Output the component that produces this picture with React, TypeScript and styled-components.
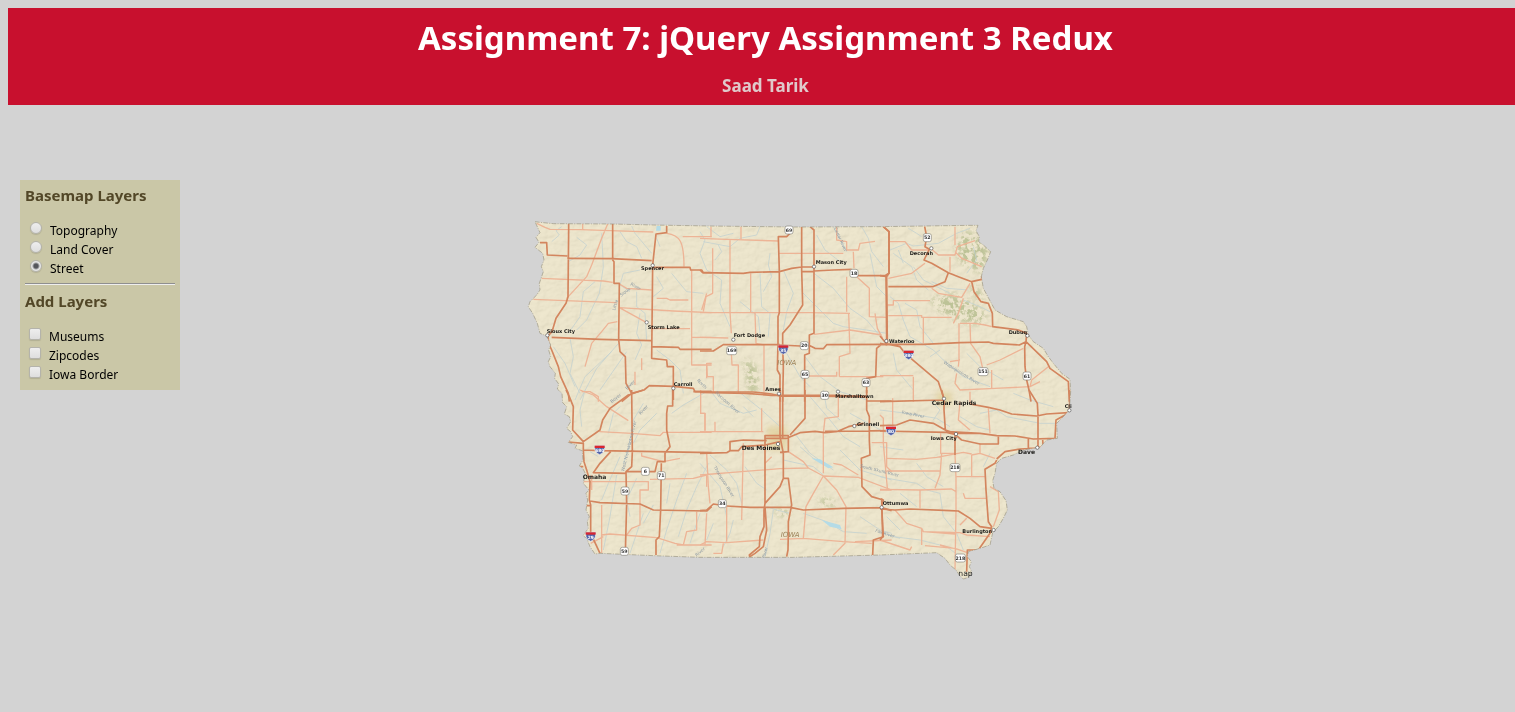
import React from 'react';
import styled, { createGlobalStyle } from 'styled-components';

const GlobalStyle = createGlobalStyle`
  body {
    margin: 8px 0 8px 8px;
    background: #d3d3d3;
    color: #000;
    font-family: Tahoma, "Noto Sans", sans-serif;
  }
`;

const Header = styled.header`
  padding: 10px 0 9px 8px;
  background: #c8102e;
  text-align: center;
`;

const Title = styled.h1`
  margin: 0 0 18px;
  color: #fff;
  font-size: 33px;
  line-height: 40px;
`;

const Author = styled.p`
  margin: 0;
  color: #e0c9cb;
  font-size: 17px;
  font-weight: bold;
  line-height: 20px;
`;

const Main = styled.main`
  display: flex;
  align-items: flex-start;
  padding: 75px 96px 0 12px;
`;

const Panel = styled.form`
  flex: none;
  width: 150px;
  padding: 5px 5px 6px;
  background: #cac7a7;
`;

const LayerGroup = styled.fieldset`
  min-width: 0;
  margin: 0;
  padding: 0;
  border: 0;
`;

const GroupTitle = styled.legend`
  margin: 0 0 16px;
  padding: 0;
  color: #524727;
  font-size: 15px;
  font-weight: bold;
  line-height: 20px;
`;

const Divider = styled.hr`
  margin: 5px 0 6px;
  border: 0;
  border-top: 1px solid #8f8f8f;
  border-bottom: 1px solid #eee;
`;

const Option = styled.label<{ $indent: number }>`
  display: flex;
  align-items: flex-start;
  gap: 8px;
  padding-left: ${(p) => p.$indent}px;
  font-size: 12px;
  line-height: 19px;
`;

const Tick = styled.input`
  appearance: none;
  flex: none;
  box-sizing: border-box;
  width: 12px;
  height: 12px;
  margin: 1px 0 0;
  border: 1px solid #b4b3ab;
  border-radius: 2px;
  background: linear-gradient(#eee, #dedede);
  box-shadow: 0 1px 1px rgba(0, 0, 0, 0.12);

  &[type='radio'] {
    border-radius: 50%;
  }
  &[type='radio']:checked {
    background: radial-gradient(circle, #55565c 0 2px, #e6e6e6 4px);
  }
  &[type='checkbox']:checked {
    background: #666;
  }
`;

const MapArea = styled.section`
  flex: 1;
  display: flex;
  justify-content: center;
  padding-top: 30px;
`;

const MapSvg = styled.svg`
  display: block;
  flex: none;
  width: 560px;
  height: 380px;
  font-family: "DejaVu Sans", sans-serif;
`;

const Relief = styled.path`
  mix-blend-mode: multiply;
`;

const OUTLINE =
  'M45 35L60 37L100 41L280 42L400 45L570 48L820 51L1080 50L1350 46L1374 46L1368 62L1378 80L1376 95L1390 105L1412 125L1402 150L1390 175L1384 200L1390 235L1406 265L1425 300L1460 320L1510 335L1520 350L1525 375L1540 395L1570 415L1585 440L1600 460L1625 490L1650 508L1652 545L1648 600L1630 620L1610 640L1612 685L1580 690L1560 712L1510 720L1480 735L1445 745L1430 760L1425 790L1418 812L1422 835L1440 845L1458 872L1462 900L1450 925L1435 950L1418 968L1410 1005L1380 1015L1345 1025L1342 1040L1354 1055L1348 1070L1355 1085L1346 1102L1330 1107L1318 1095L1308 1080L1290 1065L1275 1045L1250 1028L1080 1035L820 1042L540 1042L400 1037L240 1030L225 1032L210 1010L200 985L189 977L205 955L202 935L208 920L198 900L203 870L198 850L207 840L190 820L196 790L188 775L178 768L189 750L187 722L165 715L170 705L145 697L158 680L152 665L140 655L152 635L148 620L133 612L140 590L128 578L126 550L112 537L116 522L104 505L106 490L90 470L85 455L92 440L86 420L92 405L80 378L60 370L52 340L38 310L25 290L30 275L50 255L60 240L58 220L70 185L64 170L72 150L68 130L45 112L57 97L48 82L60 68Z';

type Tile = { x: number; y: number; major: string; minor: string; rivers: string };

const TILES: Tile[] = [
  {
    x: 0,
    y: 0,
    major:
      'M146 35V60L144 260L138 280L108 325L96 365L84 378L86 400L95 420L115 470L122 500L145 550L148 575M60 98H80L82 135L142 138M142 145L275 146L395 152M278 40V150L282 155V220H298L296 388L300 425L316 440L318 520L335 550M440 48V68L408 72L398 165L395 445L440 450L442 470H460V570M395 172H510L512 180H545L550 188H575M95 382L240 388L395 392M395 410L475 412L480 418H575M305 575L335 550L372 540L388 527L460 529L520 535L525 545H575',
    minor:
      'M50 40L75 52L90 58L180 59L340 64L400 66M188 38V60M263 42L245 85L215 165L200 200L140 265M65 205L250 213L278 217M40 268L290 278M298 222L320 235L395 240M298 293L460 303L575 308M410 265H440L450 270H505M380 338L298 293M440 70C480 75 492 95 492 170M488 80H575M515 180V420M292 335L265 340L245 365L215 400L195 470M395 356H510M515 382H575M515 420V465H575M365 445V480M345 485V525M185 545H210L235 560V575M575 460H560V505M545 300L560 250',
    rivers:
      'M125 50L108 62L118 75L95 95M170 82L200 105L180 135L145 155M300 65L320 95L350 110L365 145M335 48L345 70L395 130M225 215L190 245L180 320L145 370M245 70L250 170L238 250L200 330L170 360M360 180L310 190L300 225L330 245M455 190L475 215L500 245L550 250M410 85L420 110M350 245V290L375 310L380 390M410 420L450 450L480 480L490 550M300 395L230 475L180 570M320 425L240 540M275 425L195 500L165 570M150 385L160 440L150 490L180 550M100 410L135 460L165 530M410 200L430 235L400 260M540 65L555 90L540 130M360 310L350 370L365 405L345 450',
  },
  {
    x: 540,
    y: 0,
    major:
      'M0 180L8 188L130 190L150 187L238 185L275 175L305 171H340M270 70L260 80H235L238 185V308L234 320V400L232 480L240 495V575M305 50V180L308 285L270 345L248 370V405L250 470L248 575M330 50L342 60V370L328 375V430L314 435V575M305 185H340L342 183L400 180L455 178M460 197H565M550 50L567 65V190L558 195L560 390M0 423H40L70 404H240M240 405L300 408L330 407L345 415L370 416L380 404L575 403M0 546H160L215 552L240 558L500 560M545 402L530 415L527 500L500 505V550',
    minor:
      'M33 50V82M123 50V87M0 85L80 88L235 93M90 90V305L94 370M38 115V250L18 260L10 305M152 190V308M0 308H340M330 308L450 310M235 130H430M410 50V90L440 95V120H475L480 100L525 94M460 125L462 175M440 200V305M470 200L508 235V320L560 322M342 373L450 360L545 375M446 310L450 430L418 440V500M165 310L168 400L192 405V545M0 382L85 384M94 430L96 465H115V550M20 465L22 500H40V545M315 498H410M418 500H550M525 310L532 355L548 385M410 485V500',
    rivers:
      'M180 50L170 75L120 85L90 110L10 95M55 105L65 125L45 150M210 130L205 165L215 200L190 245M180 190L185 290L210 310L205 380M250 180L280 250L260 305L250 360M305 245L320 260L400 340L430 350L500 360L560 370M342 190L400 235L450 295L500 330L550 390M485 50L505 85L515 125L550 170M350 75L375 120L420 155M0 130L20 180L65 210L60 280L90 350M120 275L175 320L180 370M400 50L440 125M315 440L360 500L420 545L500 570M260 430L300 500L330 530M20 50L60 80L100 70M510 130L530 230L560 260',
  },
  {
    x: 1080,
    y: 0,
    major:
      'M10 50L27 65V190L20 198L22 400M0 197L22 200M134 50L140 80L135 110L148 118L132 150L155 160L205 188L235 200L275 215L305 208V198M205 188L195 215L158 230H25M275 215L282 245L303 275L325 280L337 310L338 350L415 360L440 370L438 395L418 405L340 400L325 396L240 398L130 403H0M440 375L438 395L434 410L435 470L440 510L447 540L453 575M438 395L500 455L510 475L565 515L568 575M0 378L20 402L60 410L75 430L175 515L190 560M0 400L22 405',
    minor:
      'M30 95H75L95 120H145M155 118L175 135H225L232 110L285 92M210 140V185M225 125L245 145L305 170M225 50V105M25 205L95 190L135 160M155 235L175 250L245 262L270 220M250 265L235 310L220 340M150 272H40V285H22M25 317H125V322H215M130 320V400M237 340V450L235 470M240 340H285L315 345L335 350M270 340L272 400L300 440L308 475M320 465L360 450L430 415M210 455L240 450M230 490L225 520L240 540L345 535L450 530L480 515M100 500V575M0 497H100M335 480V535M450 530L455 510L505 470',
    rivers:
      'M85 55L110 70L125 80M30 120L80 100L100 108L175 100L230 70L270 55M40 130L95 170L110 210L145 240M55 120L70 160M100 170L130 210L210 250M30 260L55 280L70 330L90 380L160 420L190 450L250 500L330 530M75 280L110 300L120 350L160 400M155 215L200 235L265 240M250 270L300 290L330 305M180 420L150 440M260 430L300 470L370 510M280 110L290 150L260 190M40 430L50 480L100 540',
  },
  {
    x: 0,
    y: 540,
    major:
      'M138 0L148 20L160 50L158 120L190 155L240 120L248 90L270 55L325 15L370 0M335 0L337 185L335 230L318 245L320 340L316 490M145 156L190 160V180L192 215L200 240L210 275L208 330L212 345V430L240 490M192 180L240 182L575 188M272 185L240 220L220 248L320 250M318 245H405L412 215H435V190L450 170L440 120V70L443 48H458V0M424 220L422 360L418 440L408 450V495M210 333L240 338L360 342L400 360L560 363L575 350M195 347H212M190 230H180M520 5H575',
    minor:
      'M180 0L220 15L260 50L325 92M238 125L335 130L420 137L430 127H575M542 0V70H555V125M365 188V198L430 215L480 205M190 275H385V300H360V405L335 415L320 435M245 345V435L270 432L410 443L465 460L490 465L500 425L530 420V365M470 465H575M245 435V490M212 460L250 440M390 268L520 265L560 255V290M215 255V300',
    rivers:
      'M195 0L180 60L185 110M300 50L280 70L265 130M370 40L340 90L325 180L310 220M560 5L490 45L455 70M410 70L360 120L340 160M300 200L265 280L245 330M290 255L270 380L250 480M370 370L350 430L330 490M400 345L370 400M500 250L470 330L440 420L420 490M565 220L530 290L500 360L475 440M540 370L510 460M210 185L235 200M450 280L440 340M350 265L320 330L330 380',
  },
  {
    x: 540,
    y: 540,
    major:
      'M0 7L140 10L215 16H400L500 20M240 0V140L250 190V265L240 290L195 340M248 0V145M315 0V85L270 135M500 0V60L508 80V150L510 195L484 205L486 290L515 320L550 330L545 350L550 440L520 450L518 495M0 190L80 188L90 182H115L125 170L195 165L240 155M90 182V155L130 150L200 152M195 155V137H265V185L240 187M195 145H260L300 128L345 124L375 128L410 125L445 110L490 100M375 124L575 122M195 140V340L192 360V410L180 440L178 470L148 495L150 502M195 350L200 420L190 470L165 490L150 500M0 362L20 360L40 342L60 345M80 348L150 352H270L310 360L430 355L545 353L575 362M250 265H265L275 345L265 395V430L264 480L260 500M500 33H575',
    minor:
      'M0 70H15V120M45 125V95M0 125H190M185 55V125M130 160L125 390M20 190L25 290L30 340M0 255L125 245L240 236L325 234M265 185L310 215L325 234L370 258L475 262L575 300M370 258L340 310L318 350L310 445M370 250V130L375 85L415 80V20M370 258L410 300L438 350L435 460L400 495M195 220L215 200M80 350V455M20 370L15 465M0 465L20 455L80 458L190 450M240 448L310 445L430 455L515 460M400 220L425 225L475 255M515 158H560V230L575 245M40 490H65L70 460M465 455L575 450M540 300H575',
    rivers:
      'M30 0L60 40L130 70L170 60M110 0L185 60L240 110M30 195L80 240L110 280L125 340M0 220L60 290L80 380M130 50L160 80M135 230L170 280L200 300M330 20L390 90L430 140L480 170M370 0L380 55L420 90M280 125L330 190L400 240M250 210L340 230L370 255M310 370L380 395L430 425L500 430M200 350L230 360L270 370M100 390L90 430L70 470M420 180L480 240L575 270M450 70L560 130M300 170L340 205L380 225M40 400L20 450M480 380L540 420L575 430M220 360L210 430L195 500',
  },
  {
    x: 1080,
    y: 540,
    major:
      'M0 35L190 30M185 0L192 30V60L196 120L225 130L300 130L350 137L405 138L460 147L525 145L528 90L568 68L570 0M270 42L325 52L360 60L395 72L470 78L500 72L565 68M447 0L472 40L474 75V170M0 107L50 105L90 90L160 100L205 125L300 130M0 123L200 127L225 133L245 150L300 162H355V137M225 133V195M350 207L375 185L420 177L465 175L490 170L525 148M445 145V175H490L488 150M350 210L345 220L315 238L318 300L325 395L335 410L330 430L295 480H262L260 545M0 357L45 360L90 357L210 362L235 363L270 385L300 410L335 415M5 325L8 440L0 450',
    minor:
      'M0 75L10 85V160L22 295M38 25V120M240 35L235 90L270 120M325 55L330 130M270 5V40M182 130V190H225M185 190L180 255L165 295M225 195L228 265V360L225 540M20 205L110 208L170 202L250 187L275 192M275 195V260M20 243H180M230 260H315M0 298L120 300L215 297L228 305M120 300V355M250 310L255 325H320M300 160V190L275 195M300 190L345 205M330 290L355 305L358 360L340 410M45 360L80 400L125 415L130 425L240 428L260 435L330 440M125 415V465M130 425L225 432M0 450L90 480L95 470M135 467L225 475L260 487M240 405L260 385M180 465L220 475',
    rivers:
      'M0 60L80 70L170 85L210 110M150 30L180 60L160 90M300 70L350 60L380 80L480 100L530 100M0 170L70 180M0 260L50 270L110 280L140 300L180 310L190 380L230 430L250 480M110 220L140 260L190 290M60 310L110 350M20 380L60 420M330 190L310 230M10 430L60 445M40 440L120 450L200 470L240 500M240 80L290 110L330 120M400 10L450 30L520 50',
  },
];

type City = { n: string; x: number; y: number; s?: number; d?: [number, number] };

const CITIES: City[] = [
  { n: 'Spencer', x: 363, y: 180, d: [398, 166] },
  { n: 'Sioux City', x: 80, y: 370, d: [82, 376] },
  { n: 'Storm Lake', x: 383, y: 356, d: [380, 337] },
  { n: 'Carroll', x: 461, y: 527, d: [460, 535] },
  { n: 'Mason City', x: 887, y: 162, d: [882, 170] },
  { n: 'Fort Dodge', x: 641, y: 381, d: [640, 389] },
  { n: 'Ames', x: 736, y: 543, d: [777, 551] },
  { n: 'Marshalltown', x: 946, y: 563, d: [954, 545] },
  { n: 'Decorah', x: 1169, y: 135, d: [1234, 115] },
  { n: 'Waterloo', x: 1107, y: 398, d: [1099, 393] },
  { n: 'Dubuq', x: 1466, y: 373, d: [1522, 377] },
  { n: 'Cedar Rapids', x: 1235, y: 586, s: 18, d: [1272, 566] },
  { n: 'Cli', x: 1634, y: 594, d: [1648, 601] },
  { n: 'Grinnell', x: 1011, y: 647, d: [1003, 648] },
  { n: 'Iowa City', x: 1232, y: 690, d: [1308, 672] },
  { n: 'Dave', x: 1494, y: 731, s: 18, d: [1552, 713] },
  { n: 'Des Moines', x: 665, y: 720, s: 18, d: [774, 702] },
  { n: 'Omaha', x: 188, y: 808, s: 18 },
  { n: 'Ottumwa', x: 1088, y: 885, d: [1085, 892] },
  { n: 'Burlington', x: 1327, y: 968, d: [1421, 960] },
];

const ROUTES: [string, number, number][] = [
  ['69', 807, 60], ['18', 1002, 190], ['20', 853, 407], ['169', 635, 422], ['65', 855, 493],
  ['63', 1038, 518], ['30', 914, 556], ['52', 1222, 83], ['151', 1389, 485], ['61', 1521, 498],
  ['6', 376, 784], ['71', 424, 797], ['59', 315, 843], ['59', 313, 1024], ['34', 607, 881],
  ['218', 1305, 773], ['218', 1321, 1044],
];

const INTERSTATES: [string, number, number][] = [
  ['35', 790, 418], ['380', 1166, 434], ['680', 239, 719], ['29', 212, 979], ['80', 1113, 662],
];

const RIVER_NAMES: [string, number, number, number][] = [
  ['Little', 285, 302, -72], ['Sioux', 304, 260, -38], ['River', 330, 225, 28],
  ['Boyer', 275, 580, -38], ['River', 322, 540, -45],
  ['West Nishnabotna River', 312, 785, -76], ['River', 362, 615, -48],
  ['North', 530, 512, 45], ['Raccoon River', 585, 550, 42],
  ['Thompson River', 580, 772, 58], ['Cedar River', 942, 55, 66],
  ['Wapsipinicon River', 1270, 460, 32], ['Iowa River', 1145, 610, 12],
  ['South Skunk River', 1020, 772, 14], ['Fox River', 1065, 965, 18],
  ['River', 735, 1045, -75], ['River', 530, 1040, -40],
];

const WOODS =
  'M1330 60L1375 75L1410 125L1385 190L1350 175L1315 150L1305 110Z M1230 265L1300 250L1360 280L1405 320L1370 345L1310 330L1250 300Z M665 440L710 470L715 530L690 570L680 500Z M900 860L940 870L950 890L900 885Z M770 895L820 900L800 920L765 915Z M1340 215L1380 240L1400 280L1365 260Z';

const IowaMap = () => (
  <MapSvg viewBox="0 0 1680 1140" role="img" aria-label="Street map of Iowa">
    <defs>
      <clipPath id="state">
        <path d={OUTLINE} />
      </clipPath>
      <filter id="relief" x="0" y="0" width="100%" height="100%">
        <feTurbulence type="fractalNoise" baseFrequency="0.035 0.05" numOctaves="3" seed="7" result="n" />
        <feDiffuseLighting in="n" surfaceScale="5" lightingColor="#fff" result="l">
          <feDistantLight azimuth="225" elevation="62" />
        </feDiffuseLighting>
        <feComposite in="l" in2="SourceGraphic" operator="in" />
      </filter>
      <filter id="woods" x="-10%" y="-10%" width="120%" height="120%">
        <feGaussianBlur in="SourceGraphic" stdDeviation="10" result="b" />
        <feTurbulence type="fractalNoise" baseFrequency="0.07" numOctaves="3" seed="3" />
        <feColorMatrix values="0 0 0 0 0  0 0 0 0 0  0 0 0 0 0  6 0 0 0 -2.6" result="m" />
        <feComposite in="b" in2="m" operator="in" />
      </filter>
      <filter id="soft" x="-10%" y="-10%" width="120%" height="120%">
        <feGaussianBlur stdDeviation="9" />
      </filter>
    </defs>
    <path d={OUTLINE} fill="#eae0c1" />
    <g clipPath="url(#state)" fill="none" strokeLinejoin="round">
      <Relief d={OUTLINE} fill="#fff" filter="url(#relief)" opacity="0.22" />
      <path d={WOODS} fill="#aab582" opacity="0.7" filter="url(#woods)" />
      <path d="M740 650H800V720H745Z M1250 545H1295V585H1250Z" fill="#dcc98a" opacity="0.6" filter="url(#soft)" />
      {TILES.map((t) => (
        <g key={`r${t.x}-${t.y}`} transform={`translate(${t.x} ${t.y})`}>
          <path d={t.rivers} stroke="#c5d2cf" strokeWidth="3" opacity="0.85" />
        </g>
      ))}
      <path d="M875 745L900 748L940 772L925 775Z M905 930L960 945L965 958L930 950Z M410 48H422V62H408Z" fill="#b4dbe6" />
      {TILES.map((t) => (
        <g key={`m${t.x}-${t.y}`} transform={`translate(${t.x} ${t.y})`}>
          <path d={t.minor} stroke="#edb496" strokeWidth="4" />
        </g>
      ))}
      {TILES.map((t) => (
        <g key={`h${t.x}-${t.y}`} transform={`translate(${t.x} ${t.y})`}>
          <path d={t.major} stroke="#d3855e" strokeWidth="5" />
        </g>
      ))}
    </g>
    <path d={OUTLINE} fill="none" stroke="#9a9682" strokeWidth="2" strokeDasharray="14 4 3 4" />
    <g fontSize="13" fill="#8c99a3">
      {RIVER_NAMES.map(([n, x, y, r]) => (
        <text key={`${x}-${y}`} transform={`translate(${x} ${y}) rotate(${r})`}>{n}</text>
      ))}
    </g>
    <g fontSize="21" fontStyle="italic" fill="#9c835a">
      <text x="772" y="465">IOWA</text>
      <text x="782" y="981">IOWA</text>
    </g>
    {ROUTES.map(([n, x, y]) => {
      const w = n.length > 2 ? 15 : 12;
      return (
        <g key={`${x}-${y}`}>
          <rect x={x - w} y={y - 12} width={w * 2} height="24" rx="6" fill="#fff" stroke="#85837a" strokeWidth="2" />
          <text x={x} y={y + 5} fontSize="14" fontWeight="bold" textAnchor="middle" fill="#333">{n}</text>
        </g>
      );
    })}
    {INTERSTATES.map(([n, x, y]) => (
      <g key={`${x}-${y}`}>
        <path d={`M${x - 15} ${y - 12}H${x + 15}L${x + 14} ${y + 2}Q${x + 11} ${y + 11} ${x} ${y + 15}Q${x - 11} ${y + 11} ${x - 14} ${y + 2}Z`} fill="#5364a9" stroke="#eee" strokeWidth="2" />
        <path d={`M${x - 15} ${y - 12}H${x + 15}V${y - 5}H${x - 15}Z`} fill="#d9252f" />
        <text x={x} y={y + 8} fontSize="13" fontWeight="bold" textAnchor="middle" fill="#fff">{n}</text>
      </g>
    ))}
    {CITIES.map((c) => (
      <g key={c.n}>
        {c.d && <circle cx={c.d[0]} cy={c.d[1]} r="5" fill="#fff" stroke="#555" strokeWidth="2" />}
        <text x={c.x} y={c.y} fontSize={c.s || 15} fontWeight="bold" fill="#1c1b18">{c.n}</text>
      </g>
    ))}
    <text x="1315" y="1097" fontSize="23" fill="#222">nap</text>
  </MapSvg>
);

const BASEMAPS = ['Topography', 'Land Cover', 'Street'];
const OVERLAYS = ['Museums', 'Zipcodes', 'Iowa Border'];

export default function App() {
  return (
    <>
      <GlobalStyle />
      <Header>
        <Title>Assignment 7: jQuery Assignment 3 Redux</Title>
        <Author>Saad Tarik</Author>
      </Header>
      <Main>
        <Panel>
          <LayerGroup>
            <GroupTitle>Basemap Layers</GroupTitle>
            {BASEMAPS.map((name) => (
              <Option key={name} $indent={5}>
                <Tick type="radio" name="basemap" value={name} defaultChecked={name === 'Street'} />
                {name}
              </Option>
            ))}
          </LayerGroup>
          <Divider />
          <LayerGroup>
            <GroupTitle>Add Layers</GroupTitle>
            {OVERLAYS.map((name) => (
              <Option key={name} $indent={4}>
                <Tick type="checkbox" value={name} />
                {name}
              </Option>
            ))}
          </LayerGroup>
        </Panel>
        <MapArea>
          <IowaMap />
        </MapArea>
      </Main>
    </>
  );
}
